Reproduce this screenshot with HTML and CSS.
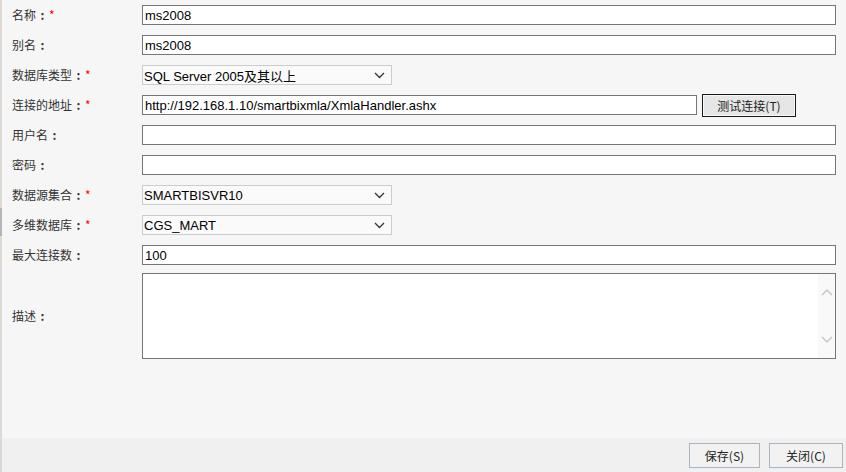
FILE: index.html
```html
<!DOCTYPE html>
<html lang="zh-CN">
<head>
  <meta charset="UTF-8">
  <title>数据源</title>
  <link rel="stylesheet" href="styles.css">
</head>
<body>
  <div class="dialog">
    <div class="edge-thumb"></div>
    <form class="form-body">
      <div class="row">
        <label>名称<span class="colon">:</span><span class="req">*</span></label>
        <input type="text" class="field" value="ms2008">
      </div>
      <div class="row">
        <label>别名<span class="colon">:</span></label>
        <input type="text" class="field" value="ms2008">
      </div>
      <div class="row">
        <label>数据库类型<span class="colon">:</span><span class="req">*</span></label>
        <div class="combo"><span>SQL Server 2005及其以上</span>
          <svg width="11" height="7" viewBox="0 0 11 7"><path d="M1 1 L5.5 5.5 L10 1" fill="none" stroke="#333" stroke-width="1.3"/></svg>
        </div>
      </div>
      <div class="row">
        <label>连接的地址<span class="colon">:</span><span class="req">*</span></label>
        <input type="text" class="field url" value="http://192.168.1.10/smartbixmla/XmlaHandler.ashx">
        <button type="button" class="test-btn">测试连接(T)</button>
      </div>
      <div class="row">
        <label>用户名<span class="colon">:</span></label>
        <input type="text" class="field">
      </div>
      <div class="row">
        <label>密码<span class="colon">:</span></label>
        <input type="password" class="field">
      </div>
      <div class="row">
        <label>数据源集合<span class="colon">:</span><span class="req">*</span></label>
        <div class="combo"><span>SMARTBISVR10</span>
          <svg width="11" height="7" viewBox="0 0 11 7"><path d="M1 1 L5.5 5.5 L10 1" fill="none" stroke="#333" stroke-width="1.3"/></svg>
        </div>
      </div>
      <div class="row">
        <label>多维数据库<span class="colon">:</span><span class="req">*</span></label>
        <div class="combo"><span>CGS_MART</span>
          <svg width="11" height="7" viewBox="0 0 11 7"><path d="M1 1 L5.5 5.5 L10 1" fill="none" stroke="#333" stroke-width="1.3"/></svg>
        </div>
      </div>
      <div class="row">
        <label>最大连接数<span class="colon">:</span></label>
        <input type="text" class="field" value="100">
      </div>
      <div class="row desc-row">
        <label>描述<span class="colon">:</span></label>
        <div class="memo">
          <textarea></textarea>
          <div class="memo-scroll">
            <svg width="12" height="8" viewBox="0 0 12 8"><path d="M1 7 L6 2 L11 7" fill="none" stroke="#c8c8c8" stroke-width="1.5"/></svg>
            <svg width="12" height="8" viewBox="0 0 12 8"><path d="M1 1 L6 6 L11 1" fill="none" stroke="#c8c8c8" stroke-width="1.5"/></svg>
          </div>
        </div>
      </div>
    </form>
    <div class="footer">
      <button type="button" class="foot-btn">保存(S)</button>
      <button type="button" class="foot-btn close">关闭(C)</button>
    </div>
  </div>
</body>
</html>
```

FILE: styles.css
```css
html, body {
  margin: 0;
  padding: 0;
}

body {
  font-family: "Noto Sans CJK SC", "Liberation Sans", sans-serif;
  font-size: 12px;
  color: #333;
  background-color: #f6f6f6;
}

.dialog {
  position: relative;
  width: 846px;
  height: 472px;
  box-sizing: border-box;
  border-left: 2px solid #dcd8d4;
  display: flex;
  flex-direction: column;
}

.edge-thumb {
  position: absolute;
  left: -2px;
  top: 208px;
  width: 2px;
  height: 28px;
  background-color: #b4b4b4;
}

.form-body {
  flex: 1;
  margin: 0;
  padding: 0 10px 0 10px;
}

.row {
  display: flex;
  align-items: center;
  height: 30px;
}

.row label {
  width: 130px;
  flex: none;
  line-height: 16px;
  white-space: nowrap;
}

.colon {
  display: inline-block;
  width: 13px;
  text-align: center;
  font-weight: bold;
}

.req {
  color: #ff0000;
}

.field {
  flex: 1;
  height: 20px;
  box-sizing: border-box;
  margin: 0;
  padding: 0 2px;
  border: 1px solid #767676;
  background-color: #fff;
  font-family: "Liberation Sans", Arial, sans-serif;
  font-size: 13px;
  color: #000;
  outline: none;
}

.field.url {
  flex: none;
  width: 555px;
}

.test-btn {
  margin-left: 5px;
  width: 94px;
  height: 23px;
  padding: 0;
  border: 1px solid #1a1a1a;
  box-shadow: inset 0 0 0 1px #f8f8f8;
  background-color: #e6e6e6;
  font-family: "Noto Sans CJK SC", sans-serif;
  font-size: 12px;
  color: #222;
}

.combo {
  width: 250px;
  height: 20px;
  box-sizing: border-box;
  border: 1px solid #cccccc;
  background-color: #fafafa;
  display: flex;
  align-items: center;
  justify-content: space-between;
  padding: 0 6px 0 1px;
  font-family: "Liberation Sans", Arial, sans-serif;
  font-size: 13px;
  color: #000;
}

.combo span {
  font-family: "Liberation Sans", "Noto Sans CJK SC", sans-serif;
}

.desc-row {
  height: 86px;
  padding-top: 3px;
}

.memo {
  flex: 1;
  height: 86px;
  box-sizing: border-box;
  border: 1px solid #767676;
  background-color: #fff;
  display: flex;
}

.memo textarea {
  flex: 1;
  border: none;
  resize: none;
  outline: none;
  margin: 0;
  padding: 2px;
}

.memo-scroll {
  width: 17px;
  background-color: #f9f9f9;
  display: flex;
  flex-direction: column;
  justify-content: space-between;
  align-items: center;
  padding: 14px 0 14px 0;
}

.footer {
  height: 34px;
  background-color: #f0f0f0;
  display: flex;
  justify-content: flex-end;
  align-items: center;
  padding-right: 3px;
  gap: 9px;
}

.foot-btn {
  width: 71px;
  height: 25px;
  padding: 0;
  border: 1px solid #a9b6c2;
  background-color: #f2f2f2;
  font-family: "Noto Sans CJK SC", sans-serif;
  font-size: 12px;
  color: #222;
}

.foot-btn.close {
  width: 74px;
}
```
